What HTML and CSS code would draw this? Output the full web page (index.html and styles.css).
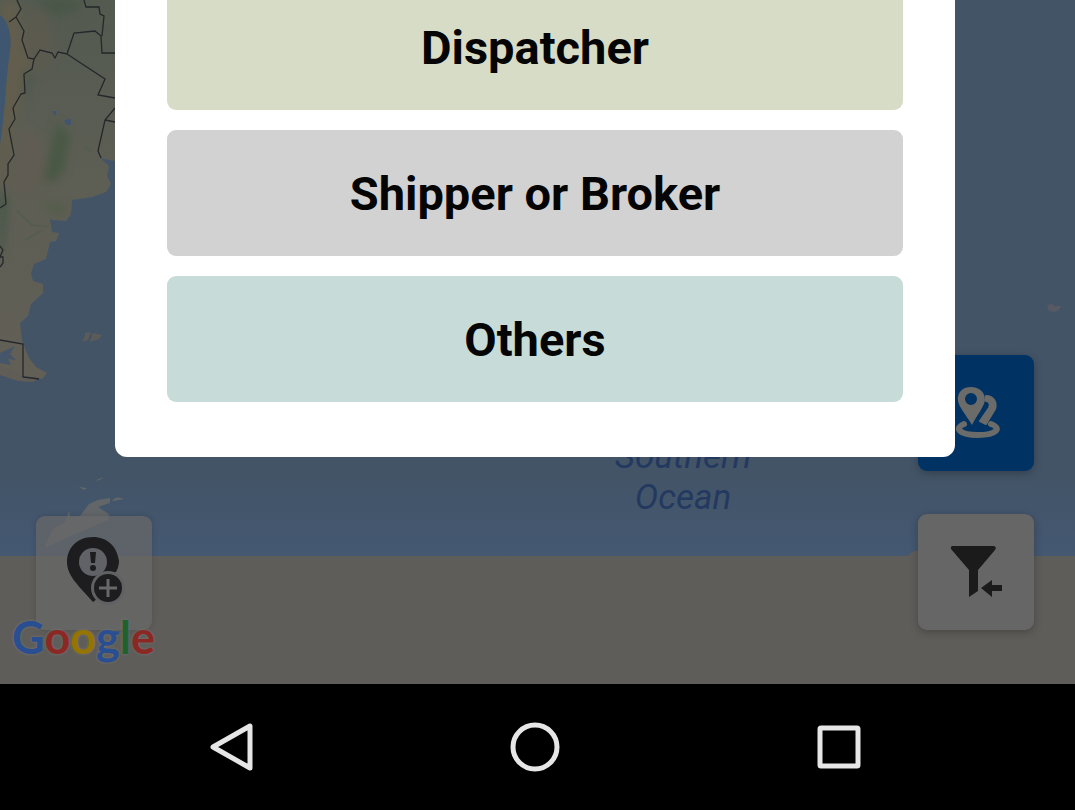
FILE: index.html
```html
<!DOCTYPE html>
<html lang="en">
<head>
<meta charset="utf-8">
<meta name="viewport" content="width=device-width, initial-scale=1">
<title>Choose your role</title>
<link rel="stylesheet" href="styles.css">
</head>
<body>
<main class="map-area">
  <svg class="map" viewBox="0 0 1075 684" preserveAspectRatio="xMinYMin slice" aria-hidden="true">
    <defs>
      <linearGradient id="sea" x1="0" y1="0" x2="0" y2="1">
        <stop offset="0" stop-color="#435467"/>
        <stop offset=".7" stop-color="#435467"/>
        <stop offset=".81" stop-color="#445872"/>
      </linearGradient>
      <linearGradient id="land" x1="0" y1="0" x2="0" y2="1">
        <stop offset="0" stop-color="#535a50"/>
        <stop offset=".45" stop-color="#5d5e54"/>
        <stop offset="1" stop-color="#625f56"/>
      </linearGradient>
      <filter id="soft" x="-30%" y="-30%" width="160%" height="160%"><feGaussianBlur stdDeviation="4"/></filter>
      <clipPath id="coast"><path id="continent" d="M0 0H115V161L100 158L109 166L107 176L111 184L106 192L92 197L72 200L71 214L66 221L53 220L50 219L52 232L59 233L56 241L50 242L46 259L34 264L31 273L33 281L43 284L43 293L31 304L28 316L20 323L22 341L29 358L36 367L47 373L42 379L22 376L0 380Z"/></clipPath>
    </defs>
    <rect width="1075" height="684" fill="url(#sea)"/>
    <g clip-path="url(#coast)">
      <rect width="120" height="390" fill="url(#land)"/>
      <g filter="url(#soft)">
        <path d="M0 0H18L25 40L34 60L24 95L14 125L8 180L0 200Z" fill="#625d4d"/>
        <path d="M36 0H86L72 13L52 16Z" fill="#4a5646"/>
        <path d="M28 5L48 15L54 60L40 74L25 50Z" fill="#5c5a50"/>
        <path d="M57 120L70 136L64 172L50 184L44 178Z" fill="#4a5945"/>
        <path d="M23 125L45 145L43 180L25 195L10 190Z" fill="#605c52"/>
        <path d="M0 185L7 200L4 245L0 260Z" fill="#405545"/>
        <path d="M45 200L68 205L62 217L49 214Z" fill="#555d4c"/>
        <path d="M24 70L35 75L29 95L23 110Z" fill="#4f594f"/>
      </g>
      <path d="M17 211L32 225L49 227M25 240L43 230M84 147L92 151M48 115L55 128L47 138" fill="none" stroke="#555d50" stroke-width="2"/>
      <path d="M0 15Q13 25 10 52Q7 70 5 100Q3 125 0 145Z" fill="#3f5670"/>
      <path d="M64 120L71 119L71 125L66 125ZM52 111L57 111L55 116Z" fill="#43546f"/>
      <path d="M0 353L15 346L10 354L16 360L8 359L11 365L0 363Z" fill="#45566a"/>
      <path d="M0 374L14 376L26 382L0 386Z" fill="#435467"/>
    </g>
    <path d="M0 366L16 371L24 378L38 379L33 382L18 381L0 375Z" fill="#605d56"/>
    <g fill="none" stroke="#25272a" stroke-width="1.3">
      <path d="M17 0L21 9L16 17L9 22M16 17L24 31L22 40L28 58L34 59L40 50L52 53L55 58L58 52L67 54L74 33L95 31L101 36L102 53H115M84 0L86 7H99L100 14L104 16L102 36M67 54L105 79L98 95L115 98M34 59L32 69L24 74L25 93L21 94L13 108L15 119L9 129L14 155L8 164V175L4 182L6 204L0 208"/>
      <path d="M115 108L105 120L98 151L101 158M105 120L115 122M0 246L3 250L0 257H3V263L0 267M0 340L23 344V377L39 379"/>
    </g>
    <path d="M85 333L91 332L88 340L82 342L85 336ZM93 333L102 335L99 339L90 342Z" fill="#5c5b58"/>
    <path d="M1047 305L1053 304L1054 306L1061 306L1059 310L1055 312L1049 311Z" fill="#575963"/>
    <path d="M80 516L89 504L98 500L110 498V503L98 507L109 514L108 520L44 548L53 529L65 522L69 511L70 517ZM112 501Q116 495 124 499L113 501ZM79 487L87 488L84 490ZM96 481Q98 478 104 478L99 480Z" fill="#626669"/>
    <path d="M0 556H908Q913 550 919 551H1034V556H1075V684H0Z" fill="#5f5d59"/>
  </svg>
  <p class="sea-label">Southern<br>Ocean</p>

  <p class="brand"><span class="b">G</span><span class="r">o</span><span class="y">o</span><span class="b">g</span><span class="g">l</span><span class="r">e</span></p>

  <button class="tool tool-report" type="button" aria-label="Add report">
    <svg viewBox="0 0 116 116" aria-hidden="true">
      <path d="M57 21C41 21 31 32 31 46C31 60 43 70 57 86L61 83C56 69 64 59 80 56C82 52 83 49 83 45C81 30 71 21 57 21Z" fill="#1d1d1f"/>
      <circle cx="57" cy="46" r="14" fill="#606267"/>
      <path d="M54 36H60L59 47H55Z" fill="#1d1d1f"/><circle cx="57" cy="52" r="3" fill="#1d1d1f"/>
      <circle cx="72" cy="72" r="17" fill="#606163"/><circle cx="72" cy="72" r="14" fill="#1d1d1f"/>
      <path d="M72 63V81M63 72H81" stroke="#686868" stroke-width="3"/>
    </svg>
  </button>

  <div class="tools">
    <button class="tool tool-places" type="button" aria-label="Places">
      <svg viewBox="0 0 116 116" aria-hidden="true">
        <path d="M46 69C36 73 41 80 60 80C79 80 84 73 73 69" fill="none" stroke="#6b6b69" stroke-width="6" stroke-linecap="round"/>
        <path d="M68 41C76 41 79 48 77 54L68 69L62 66L71 53C73 49 71 46 68 46Z" fill="#6b6b69" stroke="#6b6b69" stroke-width="2" stroke-linejoin="round"/>
        <path fill-rule="evenodd" d="M53 32C44 32 39 38 40 46C41 52 48 60 54 70C59 60 66 52 67 45C67 37 61 32 53 32ZM53 38A6 6 0 1 1 53 50A6 6 0 1 1 53 38Z" fill="#6b6b69"/>
      </svg>
    </button>
    <button class="tool tool-filter" type="button" aria-label="Filter">
      <svg viewBox="0 0 116 116" aria-hidden="true">
        <path d="M34 32H76Q79 33 77 36L60 56V77L51 83V56L33 35Q32 33 34 32Z" fill="#1b1b1b"/>
        <path d="M63 74L74 66V71H84V77H74V83Z" fill="#1b1b1b"/>
      </svg>
    </button>
  </div>

  <section class="dialog" role="dialog" aria-label="Choose your role">
    <button class="choice choice-dispatcher" type="button">Dispatcher</button>
    <button class="choice choice-shipper" type="button">Shipper or Broker</button>
    <button class="choice choice-others" type="button">Others</button>
  </section>
</main>
<nav class="navbar" aria-label="System navigation">
  <button class="nav-key" type="button" aria-label="Back"><svg viewBox="0 0 56 56" aria-hidden="true"><path d="M47 7V49L10 28Z"/></svg></button>
  <button class="nav-key" type="button" aria-label="Home"><svg viewBox="0 0 56 56" aria-hidden="true"><circle cx="28" cy="28" r="22"/></svg></button>
  <button class="nav-key" type="button" aria-label="Recent apps"><svg viewBox="0 0 56 56" aria-hidden="true"><rect x="9" y="9" width="38" height="38" rx="1"/></svg></button>
</nav>
</body>
</html>
```
FILE: styles.css
```css
* { box-sizing: border-box; }
body {
  margin: 0;
  min-height: 100vh;
  display: flex;
  flex-direction: column;
  background: #000;
  font-family: Roboto, "Liberation Sans", sans-serif;
}
button {
  border: 0;
  padding: 0;
  font: inherit;
  color: inherit;
  cursor: pointer;
}
.map-area {
  position: relative;
  flex: 1;
  overflow: hidden;
  background: #5f5d59;
}
.map {
  position: absolute;
  inset: 0;
  width: 100%;
  height: 100%;
}
.sea-label {
  position: absolute;
  top: 436px;
  left: 603px;
  width: 160px;
  margin: 0;
  font-size: 35px;
  font-style: italic;
  line-height: 41px;
  text-align: center;
  color: #23395f;
}
.tool {
  display: block;
  width: 116px;
  height: 116px;
  border-radius: 9px;
  box-shadow: 0 2px 8px rgba(0, 0, 0, .25);
}
.tool svg {
  display: block;
  width: 100%;
}
.tools {
  position: absolute;
  right: 41px;
  bottom: 54px;
  display: flex;
  flex-direction: column;
  gap: 43px;
}
.tool-report {
  position: absolute;
  left: 36px;
  bottom: 54px;
  height: 114px;
  background: rgba(104, 104, 104, .72);
  box-shadow: 0 0 6px rgba(0, 0, 0, .15);
}
.tool-places { background: #003363; }
.tool-filter { background: #666; }
.brand {
  position: absolute;
  z-index: 1;
  left: 12px;
  bottom: 22px;
  margin: 0;
  font-family: Lato, sans-serif;
  font-size: 45px;
  font-weight: 700;
  line-height: 50px;
  text-shadow: 0 0 3px #777;
}
.b { color: #294e91; }
.r { color: #8c2824; }
.y { color: #967400; }
.g { color: #20622f; }
.dialog {
  position: absolute;
  top: -36px;
  left: 115px;
  right: 120px;
  display: flex;
  flex-direction: column;
  gap: 20px;
  padding: 20px 52px 55px;
  border-radius: 12px;
  background: #fff;
}
.choice {
  height: 126px;
  border-radius: 9px;
  font-size: 47px;
  font-weight: 700;
  color: #050505;
}
.choice-dispatcher { background: #d7dcc6; }
.choice-shipper { background: #d2d2d2; }
.choice-others { background: #c7dcd9; }
.navbar {
  display: flex;
  justify-content: center;
  gap: 248px;
  padding: 35px 5px 35px 0;
  background: #000;
}
.nav-key {
  width: 56px;
  height: 56px;
  background: none;
}
.nav-key svg {
  display: block;
  width: 100%;
  fill: none;
  stroke: #e6e6e6;
  stroke-width: 5;
  stroke-linejoin: round;
}
```
